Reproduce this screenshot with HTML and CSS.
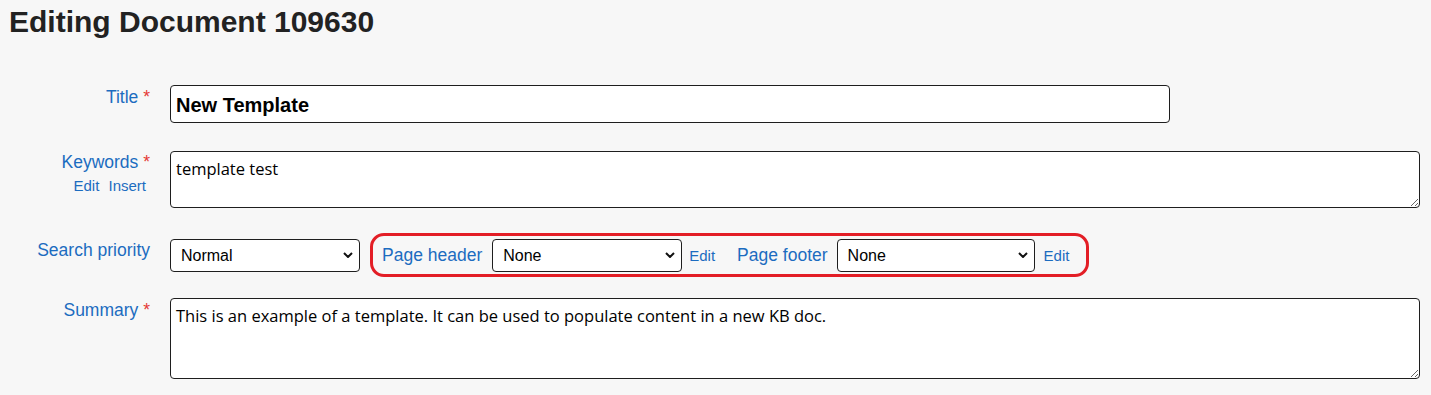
FILE: index.html
```html
<!DOCTYPE html>
<html lang="en">
<head>
    <meta charset="UTF-8">
    <meta name="viewport" content="width=device-width, initial-scale=1.0">
    <title>Editing Document 109630</title>
    <link rel="stylesheet" href="styles.css">
</head>
<body>
    <h1 class="page-title">Editing Document 109630</h1>

    <form class="doc-form">
        <div class="form-row row-title">
            <div class="form-label">
                <label for="title">Title <span class="req">*</span></label>
            </div>
            <input id="title" class="text-input title-input" type="text" value="New Template">
        </div>

        <div class="form-row row-keywords">
            <div class="form-label">
                <label for="keywords">Keywords <span class="req">*</span></label>
                <div class="label-links">
                    <a href="#">Edit</a>
                    <a href="#">Insert</a>
                </div>
            </div>
            <textarea id="keywords" class="text-area keywords-area">template test</textarea>
        </div>

        <div class="form-row row-priority">
            <div class="form-label label-priority">
                <label for="priority">Search priority</label>
            </div>
            <div class="priority-controls">
                <span class="select-wrap select-priority">
                    <select id="priority" class="select-input">
                        <option>Normal</option>
                        <option>High</option>
                        <option>Low</option>
                    </select>
                    <svg viewBox="0 0 10 6" width="10" height="6"><path d="M1 1 L5 5 L9 1" fill="none" stroke="#111" stroke-width="2"/></svg>
                </span>

                <div class="header-footer-box">
                    <label for="page-header" class="inline-label">Page header</label>
                    <span class="select-wrap select-header">
                        <select id="page-header" class="select-input">
                            <option>None</option>
                        </select>
                        <svg viewBox="0 0 10 6" width="10" height="6"><path d="M1 1 L5 5 L9 1" fill="none" stroke="#111" stroke-width="2"/></svg>
                    </span>
                    <a href="#" class="edit-link">Edit</a>

                    <label for="page-footer" class="inline-label footer-label">Page footer</label>
                    <span class="select-wrap select-footer">
                        <select id="page-footer" class="select-input">
                            <option>None</option>
                        </select>
                        <svg viewBox="0 0 10 6" width="10" height="6"><path d="M1 1 L5 5 L9 1" fill="none" stroke="#111" stroke-width="2"/></svg>
                    </span>
                    <a href="#" class="edit-link footer-edit">Edit</a>
                </div>
            </div>
        </div>

        <div class="form-row row-summary">
            <div class="form-label">
                <label for="summary">Summary <span class="req">*</span></label>
            </div>
            <textarea id="summary" class="text-area summary-area">This is an example of a template. It can be used to populate content in a new KB doc.</textarea>
        </div>
    </form>
</body>
</html>
```

FILE: styles.css
```css
:root {
    --label-color: #1c6cc0;
    --req-color: #e53935;
    --box-red: #e31e26;
    --border-color: #1e1e1e;
    --page-bg: #f7f7f7;
}

* {
    box-sizing: border-box;
}

body {
    margin: 0;
    background: var(--page-bg);
    font-family: "Liberation Sans", Arial, sans-serif;
    color: #222;
}

.page-title {
    margin: 5px 0 0;
    padding-left: 9px;
    font-size: 30px;
    line-height: 34px;
    font-weight: bold;
    color: #222;
}

.doc-form {
    margin-top: 46px;
    padding-right: 11px;
}

.form-row {
    display: flex;
    align-items: flex-start;
}

.row-title {
    margin-bottom: 28px;
}

.row-keywords {
    margin-bottom: 25px;
}

.row-priority {
    margin-bottom: 21px;
}

.form-label {
    flex: 0 0 150px;
    margin-right: 20px;
    padding-top: 2px;
    text-align: right;
    font-size: 17.5px;
    line-height: 20px;
    color: var(--label-color);
}

.row-keywords .form-label {
    padding-top: 1px;
}

.label-priority {
    padding-top: 7px;
}

.req {
    color: var(--req-color);
}

.label-links {
    margin-top: 5px;
    padding-right: 4px;
    font-size: 15px;
    line-height: 18px;
}

.label-links a {
    color: var(--label-color);
    text-decoration: none;
}

.label-links a + a {
    margin-left: 5px;
}

.text-input,
.text-area {
    border: 1px solid var(--border-color);
    border-radius: 4px;
    background: #fff;
    color: #000;
}

.title-input {
    width: 1000px;
    height: 38px;
    padding: 3px 5px 0;
    font-family: "Liberation Sans", Arial, sans-serif;
    font-size: 20px;
    font-weight: bold;
}

.text-area {
    flex: 1;
    padding: 5px 5px;
    font-family: "Open Sans", "Noto Sans", sans-serif;
    font-size: 16.5px;
    resize: vertical;
}

.keywords-area {
    height: 57px;
}

.summary-area {
    height: 81px;
}

.priority-controls {
    display: flex;
    align-items: center;
}

.select-wrap {
    position: relative;
    display: inline-block;
}

.select-wrap svg {
    position: absolute;
    right: 7px;
    top: 50%;
    margin-top: -3px;
    pointer-events: none;
}

.select-input {
    appearance: none;
    -webkit-appearance: none;
    display: block;
    height: 33px;
    padding: 0 26px 0 10px;
    border: 1px solid var(--border-color);
    border-radius: 4px;
    background: #fff;
    color: #000;
    font-family: "Liberation Sans", Arial, sans-serif;
    font-size: 16px;
}

.select-priority .select-input {
    width: 190px;
}

.select-header .select-input {
    width: 190px;
}

.select-footer .select-input {
    width: 198px;
}

.header-footer-box {
    display: flex;
    align-items: center;
    height: 44px;
    margin-left: 10px;
    padding: 0 17px 0 9px;
    border: 3px solid var(--box-red);
    border-radius: 14px;
}

.inline-label {
    margin-right: 10px;
    font-size: 17.5px;
    line-height: 20px;
    color: var(--label-color);
}

.footer-label {
    margin-left: 22px;
    margin-right: 9px;
}

.edit-link {
    margin-left: 7px;
    font-size: 15px;
    color: var(--label-color);
    text-decoration: none;
}

.footer-edit {
    margin-left: 9px;
}
```
